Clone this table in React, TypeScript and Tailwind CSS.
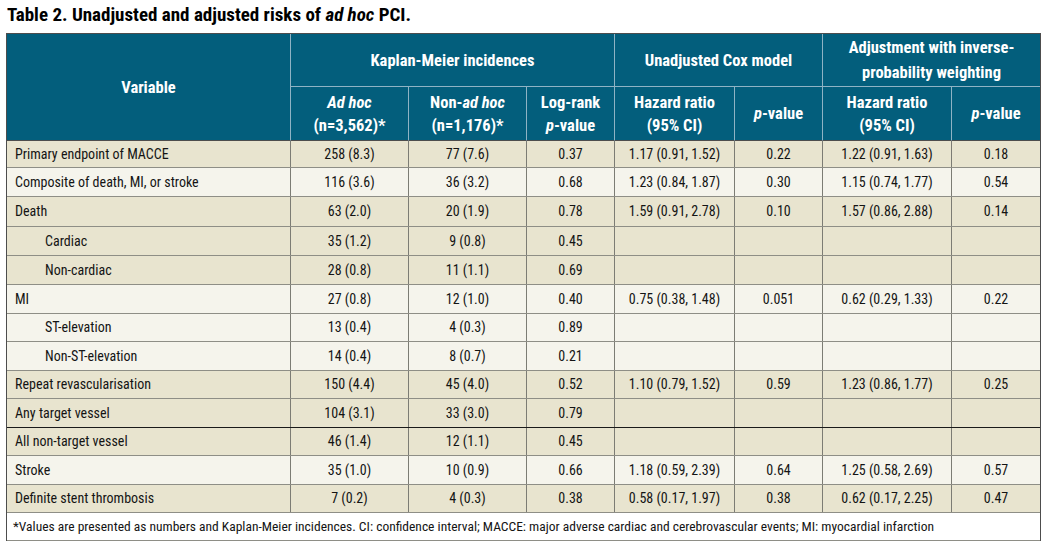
import React from "react";

const cols = "grid-cols-[284px_118px_118px_88px_120px_88px_129px_88px]";

type Row = {
  label: string;
  values: string[];
  indent?: boolean;
  tan: boolean;
  h: string;
  dark?: boolean;
};

const rows: Row[] = [
  { label: "Primary endpoint of MACCE", values: ["258 (8.3)", "77 (7.6)", "0.37", "1.17 (0.91, 1.52)", "0.22", "1.22 (0.91, 1.63)", "0.18"], tan: true, h: "h-[27px]" },
  { label: "Composite of death, MI, or stroke", values: ["116 (3.6)", "36 (3.2)", "0.68", "1.23 (0.84, 1.87)", "0.30", "1.15 (0.74, 1.77)", "0.54"], tan: false, h: "h-[29px]" },
  { label: "Death", values: ["63 (2.0)", "20 (1.9)", "0.78", "1.59 (0.91, 2.78)", "0.10", "1.57 (0.86, 2.88)", "0.14"], tan: true, h: "h-[30px]" },
  { label: "Cardiac", indent: true, values: ["35 (1.2)", "9 (0.8)", "0.45", "", "", "", ""], tan: true, h: "h-[29px]" },
  { label: "Non-cardiac", indent: true, values: ["28 (0.8)", "11 (1.1)", "0.69", "", "", "", ""], tan: true, h: "h-[29px]" },
  { label: "MI", values: ["27 (0.8)", "12 (1.0)", "0.40", "0.75 (0.38, 1.48)", "0.051", "0.62 (0.29, 1.33)", "0.22"], tan: false, h: "h-[29px]" },
  { label: "ST-elevation", indent: true, values: ["13 (0.4)", "4 (0.3)", "0.89", "", "", "", ""], tan: false, h: "h-[28px]" },
  { label: "Non-ST-elevation", indent: true, values: ["14 (0.4)", "8 (0.7)", "0.21", "", "", "", ""], tan: false, h: "h-[29px]" },
  { label: "Repeat revascularisation", values: ["150 (4.4)", "45 (4.0)", "0.52", "1.10 (0.79, 1.52)", "0.59", "1.23 (0.86, 1.77)", "0.25"], tan: true, h: "h-[28px]" },
  { label: "Any target vessel", values: ["104 (3.1)", "33 (3.0)", "0.79", "", "", "", ""], tan: true, h: "h-[29px]", dark: true },
  { label: "All non-target vessel", values: ["46 (1.4)", "12 (1.1)", "0.45", "", "", "", ""], tan: true, h: "h-[28px]" },
  { label: "Stroke", values: ["35 (1.0)", "10 (0.9)", "0.66", "1.18 (0.59, 2.39)", "0.64", "1.25 (0.58, 2.69)", "0.57"], tan: false, h: "h-[29px]" },
  { label: "Definite stent thrombosis", values: ["7 (0.2)", "4 (0.3)", "0.38", "0.58 (0.17, 1.97)", "0.38", "0.62 (0.17, 2.25)", "0.47"], tan: true, h: "h-[28px]" },
];

function HeadCell({ children, className = "" }: { children: React.ReactNode; className?: string }) {
  return (
    <div className={`flex flex-col items-center justify-center text-center leading-[23px] ${className}`}>
      {children}
    </div>
  );
}

export default function App() {
  return (
    <div className="w-[1045px] h-[545px] bg-white pl-[6px] font-['Roboto_Condensed','Roboto',sans-serif] font-stretch-condensed text-[#141414]">
      <div className="h-[33px] pt-[5px] pl-[1px] text-[19px] leading-[20px] font-bold text-black">
        Table 2. Unadjusted and adjusted risks of <i>ad hoc</i> PCI.
      </div>

      <div className="w-[1035px] border-t border-l border-r border-[#4d4d4d]">
        {/* header */}
        <div className={`grid ${cols} grid-rows-[53px_54px] bg-[#035e7c] text-white font-bold text-[16.5px]`}>
          <HeadCell className="row-span-2 border-r border-b border-r-[#8fb3c4] border-b-[#4d4d4d]">Variable</HeadCell>
          <HeadCell className="col-span-3 border-r border-b border-[#8fb3c4]">Kaplan-Meier incidences</HeadCell>
          <HeadCell className="col-span-2 border-r border-b border-[#8fb3c4]">Unadjusted Cox model</HeadCell>
          <HeadCell className="col-span-2 border-b border-[#8fb3c4] leading-[25px]">
            <span>Adjustment with inverse-</span>
            <span>probability weighting</span>
          </HeadCell>
          <HeadCell className="border-r border-b border-r-[#8fb3c4] border-b-[#4d4d4d]">
            <i>Ad hoc</i>
            <span>(n=3,562)*</span>
          </HeadCell>
          <HeadCell className="border-r border-b border-r-[#8fb3c4] border-b-[#4d4d4d]">
            <span>
              Non-<i>ad hoc</i>
            </span>
            <span>(n=1,176)*</span>
          </HeadCell>
          <HeadCell className="border-r border-b border-r-[#8fb3c4] border-b-[#4d4d4d]">
            <span>Log-rank</span>
            <span>
              <i>p</i>-value
            </span>
          </HeadCell>
          <HeadCell className="border-r border-b border-r-[#8fb3c4] border-b-[#4d4d4d]">
            <span>Hazard ratio</span>
            <span>(95% CI)</span>
          </HeadCell>
          <HeadCell className="border-r border-b border-r-[#8fb3c4] border-b-[#4d4d4d]">
            <span>
              <i>p</i>-value
            </span>
          </HeadCell>
          <HeadCell className="border-r border-b border-r-[#8fb3c4] border-b-[#4d4d4d]">
            <span>Hazard ratio</span>
            <span>(95% CI)</span>
          </HeadCell>
          <HeadCell className="border-b border-b-[#4d4d4d]">
            <span>
              <i>p</i>-value
            </span>
          </HeadCell>
        </div>

        {/* body */}
        {rows.map((r) => (
          <div
            key={r.label}
            className={`grid ${cols} ${r.h} border-b text-[14px] ${r.tan ? "bg-[#e8e4cf]" : "bg-[#f5f4ec]"} ${
              r.dark ? "border-[#1a1a1a]" : "border-[#8e8e86]"
            }`}
          >
            <div className={`flex items-center border-r border-[#7c7c74] ${r.indent ? "pl-[38px]" : "pl-[8px]"}`}>
              {r.label}
            </div>
            {r.values.map((v, i) => (
              <div
                key={i}
                className={`flex items-center justify-center ${i < 6 ? "border-r border-[#7c7c74]" : ""}`}
              >
                {v}
              </div>
            ))}
          </div>
        ))}

        {/* footnote */}
        <div className="h-[28px] flex items-center pl-[6px] border-b border-[#8e8e86] bg-white text-[13.5px]">
          *Values are presented as numbers and Kaplan-Meier incidences. CI: confidence interval; MACCE: major adverse cardiac and cerebrovascular events; MI: myocardial infarction
        </div>
      </div>
    </div>
  );
}
